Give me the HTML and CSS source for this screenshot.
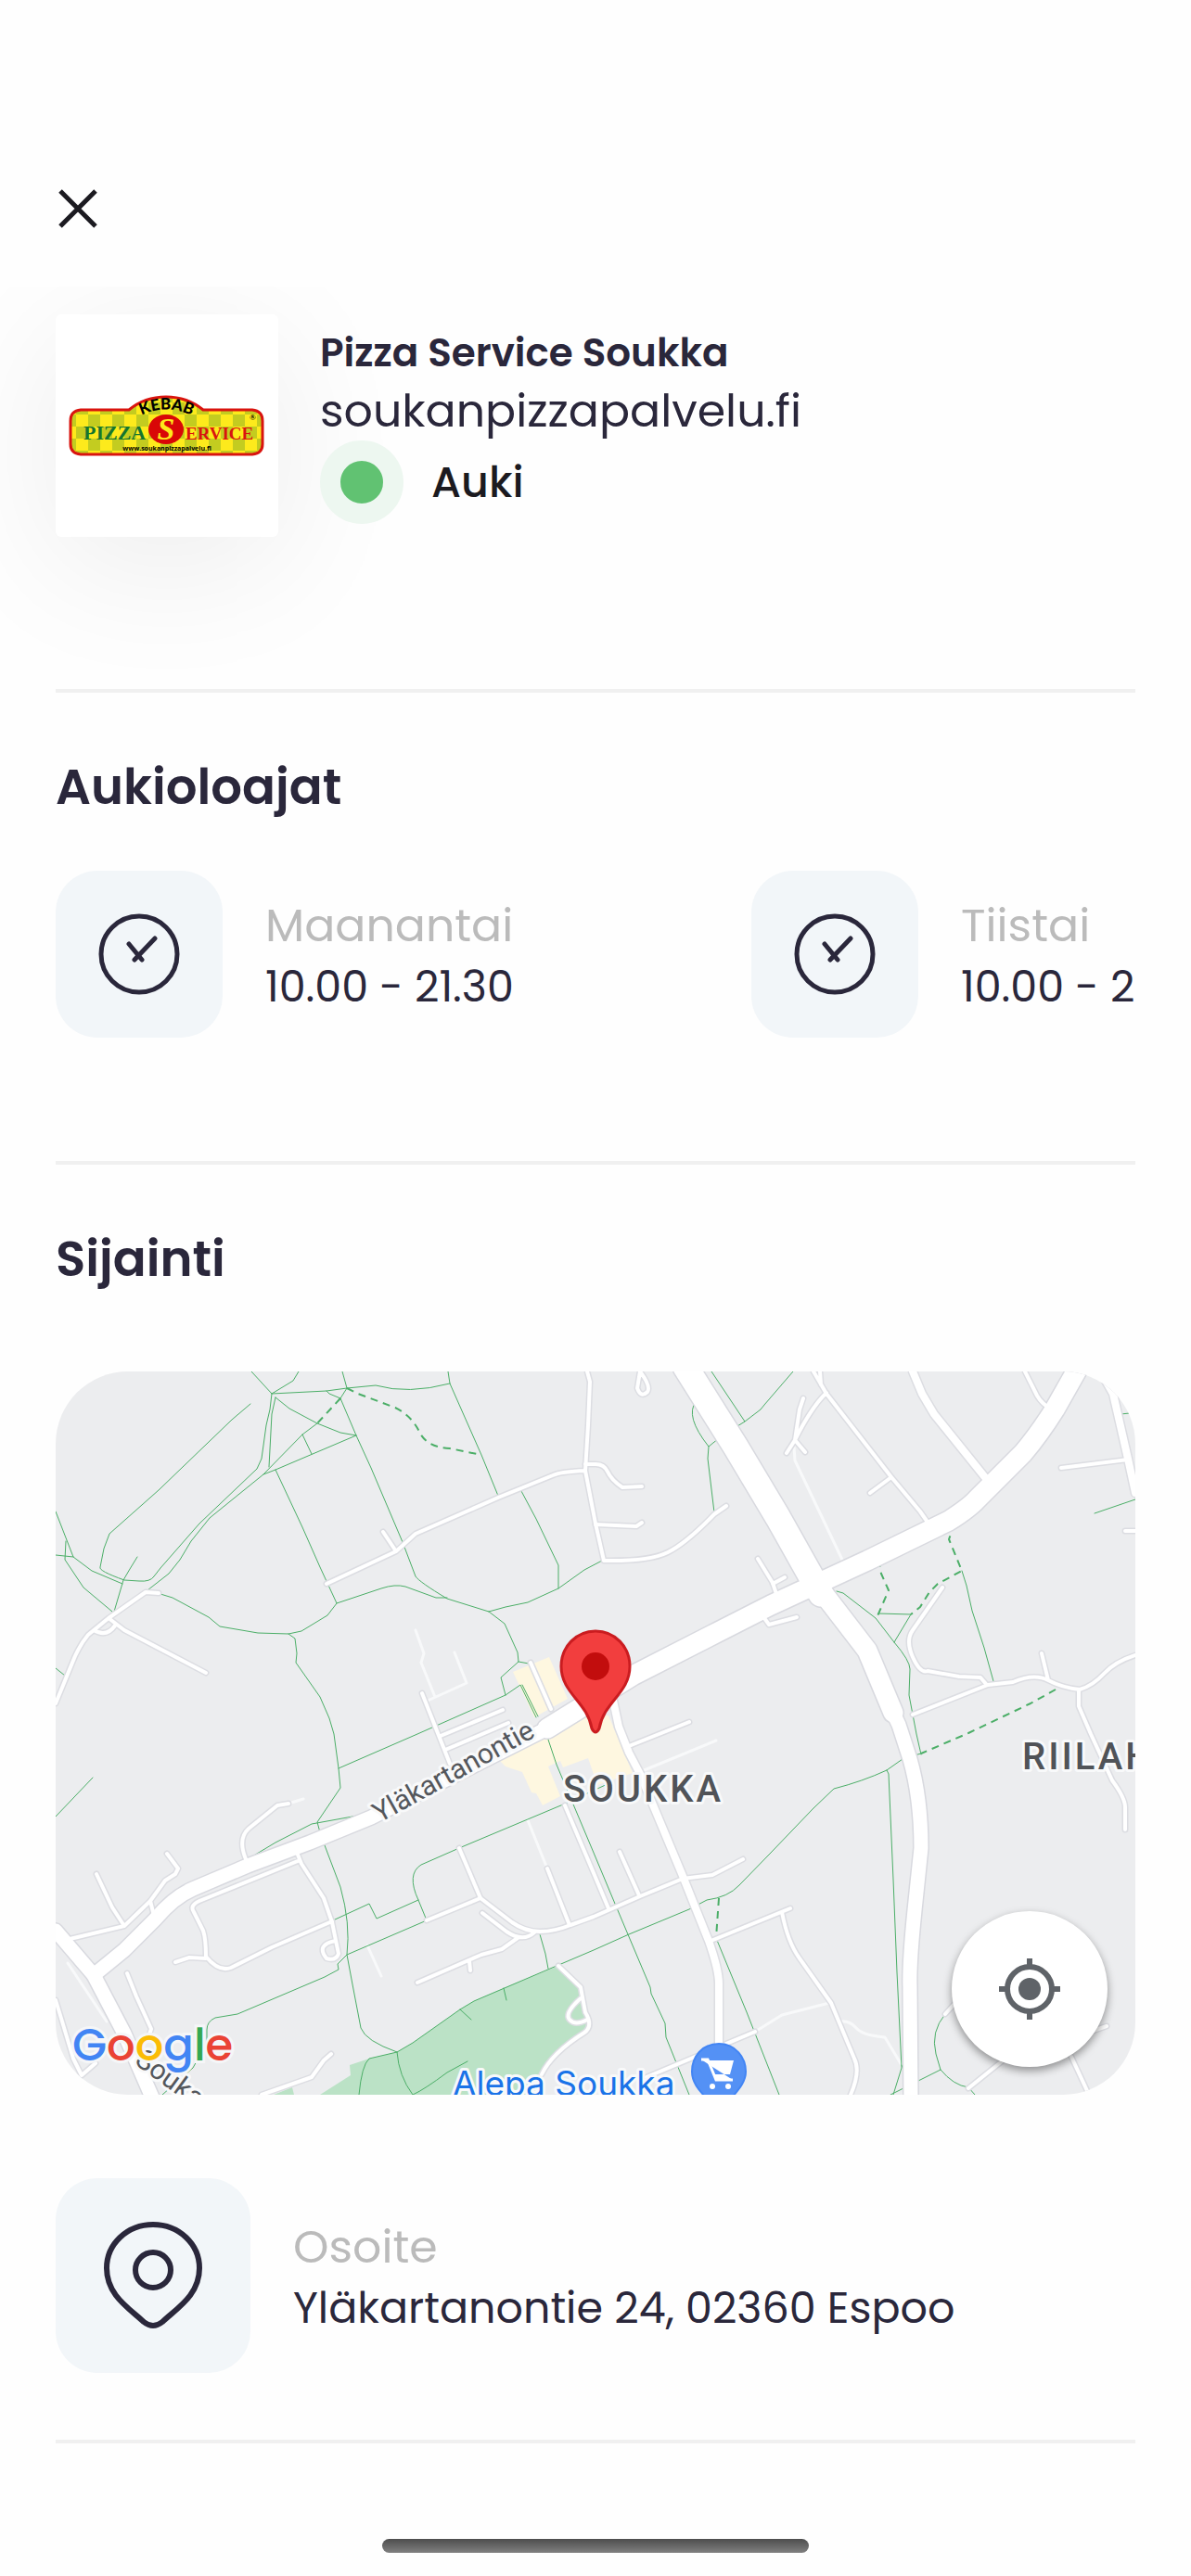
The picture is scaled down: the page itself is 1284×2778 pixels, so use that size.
FILE: index.html
```html
<!DOCTYPE html>
<html lang="fi">
<head>
  <meta charset="utf-8">
  <meta name="viewport" content="width=device-width, initial-scale=1">
  <title>Pizza Service Soukka</title>
  <link rel="stylesheet" href="styles.css">
</head>
<body>
  <header class="topbar">
    <button class="close" type="button" aria-label="Sulje">
      <svg viewBox="0 0 48 48" width="48" height="48"><path d="M5 5L43 43M43 5L5 43"/></svg>
    </button>
  </header>

  <main>
    <section class="restaurant">
      <div class="logo">
        <svg viewBox="0 0 240 240" role="img" aria-label="Pizza Service">
          <defs>
            <pattern id="checks" width="26" height="26" patternUnits="userSpaceOnUse" x="9" y="4">
              <rect width="26" height="26" fill="#fdea1c"/>
              <path d="M0 0h13v13H0zM13 13h13v13H13z" fill="#c3cc20"/>
            </pattern>
            <path id="arc" d="M85 113Q119 92 154 113"/>
          </defs>
          <path d="M27 103H79Q96 89 119 89T159 103H212Q223 104 223 115V140Q223 150 212 151H27Q16 150 16 140V115Q16 104 27 103Z" fill="url(#checks)" stroke="#d9140f" stroke-width="3"/>
          <text class="logo-kebab"><textPath href="#arc" startOffset="50%">KEBAB</textPath></text>
          <text class="logo-pizza" x="30" y="135">PIZZA</text>
          <text class="logo-service" x="140" y="135">ERVICE</text>
          <ellipse cx="119" cy="124" rx="19" ry="16" fill="#d90707"/>
          <text class="logo-s" x="119" y="135">S</text>
          <text class="logo-url" x="120" y="147">www.soukanpizzapalvelu.fi</text>
          <text class="logo-r" x="209" y="114">®</text>
        </svg>
      </div>
      <div class="details">
        <h1>Pizza Service Soukka</h1>
        <a class="site" href="#">soukanpizzapalvelu.fi</a>
        <p class="status"><span class="dot"></span>Auki</p>
      </div>
    </section>

    <section class="hours">
      <h2>Aukioloajat</h2>
      <ul class="days">
        <li class="day">
          <span class="tile">
            <svg viewBox="0 0 88 88" width="88" height="88"><circle cx="44" cy="44" r="41"/><path d="M33 33L47 50M61 27L39 50"/></svg>
          </span>
          <p class="info"><span class="label">Maanantai</span><span class="value">10.00 - 21.30</span></p>
        </li>
        <li class="day">
          <span class="tile">
            <svg viewBox="0 0 88 88" width="88" height="88"><circle cx="44" cy="44" r="41"/><path d="M33 33L47 50M61 27L39 50"/></svg>
          </span>
          <p class="info"><span class="label">Tiistai</span><span class="value">10.00 - 21.30</span></p>
        </li>
      </ul>
    </section>

    <section class="location">
      <h2>Sijainti</h2>
      <div class="map">
        <svg class="map-canvas" viewBox="0 0 1164 780" role="img" aria-label="Kartta">
          <defs>
            <!-- small streets, drawn twice: grey casing and white fill -->
            <g id="streets">
              <path d="M292 229L367 194L388 175L477 136L536 112Q545 108 571 107M353 173L367 194M573 0L576 11L574 58L571 107L582 164L591 204Q640 205 660 195T710 154L723 145"/>
              <path d="M571 100H580Q591 99 595 108T611 125L632 124M582 165L626 167L632 163"/>
              <path d="M111 239L97 238L57 266L35 284Q25 296 18 314L0 358M57 266L74 279L162 325M41 279Q55 287 64 274"/>
              <path d="M395 347L425 423M482 365L415 393M488 379L420 408M512 314L534 364"/>
              <path d="M630 0L627 18Q631 29 638 22Q642 16 630 0M817 0L831 24L901 114L932 151L939 161M824 0L825 14M831 23Q815 38 797 74L788 88M806 29L802 41L797 74L808 87M901 114L878 131"/>
              <path d="M1045 0L1058 26Q1063 35 1074 41M1084 104L1156 95M1153 172H1164"/>
              <path d="M757 202L773 228L778 243M773 229L786 222M764 266L769 273L799 265"/>
              <path d="M956 233L924 279Q916 290 924 308T940 323L974 329L997 330L1003 337M924 370L1005 338L1032 335Q1055 325 1070 333T1104 343Q1118 339 1130 326T1164 306M1063 304L1070 333M1103 343V361L1116 391L1139 441Q1153 460 1153 470V494"/>
              <path d="M683 378L618 404M400 592L458 568L492 594Q506 604 522 604T555 597L580 588L630 566L676 547L708 543L741 526M608 518L629 565M549 468L580 541L596 579"/>
              <path d="M704 615L792 579M783 583Q789 615 802 633L836 681L861 741Q868 755 857 780M754 712L637 761"/>
              <path d="M968 683L959 693M984 773L1020 744M1095 739L1114 780M1110 714L1133 706"/>
              <path d="M542 641L566 664L571 691Q580 706 570 713Q535 735 524 758M566 676Q548 692 554 699T573 699"/>
              <path d="M435 514L458 568M530 536L554 597M460 584L486 604Q504 616 516 605M498 611L481 623L459 629L390 659M446 636L447 646"/>
              <path d="M261 521L265 531L289 568L298 594L305 628Q302 636 292 633Q280 618 302 614M261 528L155 571Q144 576 149 583L159 603Q162 612 162 631Q176 648 189 643L233 621L298 593M162 633L144 632L129 637"/>
              <path d="M205 526Q196 504 208 493L239 468L251 466M120 520L132 536L129 542L118 549L102 571L74 598L11 613M44 542L61 578L74 598M102 571L105 583"/>
              <path d="M77 649L87 674L103 709L100 718M0 678L7 701L19 741L28 759L43 746M222 780L276 761L289 743L297 736"/>
            </g>
            <g id="mid-streets">
              <path d="M924 0L934 24L947 46L1005 118M1131 8L1140 24L1156 94L1164 131"/>
              <path d="M600 350L607 383L618 411L630 434L676 544L704 614Q715 645 715 660V740"/>
            </g>
            <g id="mains">
              <path class="w16" d="M41 651L74 624L107 591Q127 567 148 558L207 533L274 508L340 481L530 385"/>
              <path class="w16" d="M0 603L41 651L74 714L105 785"/>
              <path class="w16" d="M901 364L909 381L921 418Q933 460 933 514L926 581Q920 640 921 664L922 785"/>
              <path class="w22" d="M530 385L622 328L714 281L771 252L875 204L963 161Q985 147 993 138L1043 88Q1060 68 1077 41L1103 -5"/>
              <path class="w26" d="M679 -5L733 81L779 158L825 240"/>
              <path class="w22" d="M825 236L875 301L903 368"/>
            </g>
          </defs>

          <rect width="1164" height="780" fill="#ecedef"/>
          <path class="shops" d="M493 324L532 308L552 353L516 373ZM477 418L485 426L503 432L513 454L518 455L525 468L544 458L531 426L544 420L547 427L574 417L584 446L622 433L596 371H550Z"/>
          <path class="park" d="M542 641L565 664L572 694L573 708L529 744L523 760L515 780H285L318 759L317 748L338 741L368 734L385 724L436 688L451 679L483 665ZM235 780L255 772L257 780Z"/>

          <g class="alleys">
            <path d="M388 279L397 304L394 314L409 351M430 303L443 336L401 355M796 81L797 96L848 203M712 398L632 431M834 681L783 694L754 712M846 701Q856 700 862 707T880 716T894 718L912 748M509 484L530 536M336 619L351 652M251 466L267 461M13 638L55 701"/>
          </g>

          <g class="trails">
            <path d="M211 0L233 24L256 10L262 0M233 24L292 21L314 18L345 15Q380 25 425 13M423 0L425 13L459 90L477 134M309 0L314 18L307 29L324 69L340 104L374 184L388 221Q392 227 422 245L467 259M292 21L295 24L307 29"/>
            <path d="M237 28L252 40L282 56L307 66L324 69M282 56L266 68L224 111M266 68L276 89M324 69L237 106L224 111"/>
            <path d="M233 24L231 41L227 58L222 94L217 105L155 164L113 212L106 221Q102 227 90 226L74 225Q46 215 48 211L52 191L58 175L111 128L190 52L210 35M237 28L233 46L230 103"/>
            <path d="M224 111L166 158L146 183L134 203L122 218L99 236M237 106L266 168L285 211L303 250L351 234Q366 229 377 232L410 244H422M303 250L293 263L265 280L251 283L218 282L177 275L165 265L126 244L113 240"/>
            <path d="M251 283L258 288L260 304L259 314L285 351L295 374L300 391L305 428L307 449L282 486L285 497M0 151L19 200L39 215L72 229M11 183L10 203L30 233L61 259M0 198L19 200M88 200L80 213L73 225L63 259M0 320L10 328"/>
            <path d="M502 129L518 159L542 209V234M467 259L485 254L509 249L542 234L570 214L589 204M467 259L484 272L498 303L499 313L480 330L485 349M499 313L510 315M305 428L390 391L485 349L501 338L518 373M503 338L520 372"/>
            <path d="M707 0L743 54L735 59M795 0L764 36L760 41L743 54M690 33Q678 48 704 81L715 72M704 81L703 94L710 152M922 262L887 261M922 262L904 292M842 237L849 239L884 266L904 292Q921 312 921 321L920 349L928 391L933 413M977 215L982 231L988 258L1001 298L1011 334"/>
            <path d="M1120 153L1164 138M1148 46L1158 45M817 243L822 248M933 412L926 414M913 418L896 430Q870 442 839 450L817 471L771 519L737 554Q725 567 702 570L683 580L618 607L580 624L533 644L451 679L436 688L385 724L368 734L338 741Q330 748 327 780"/>
            <path d="M896 430L898 434L903 548L907 648L912 751L903 780M912 748L917 761M712 611L745 691L780 780M529 391L540 424L580 519L603 574L641 664L642 671L657 703L658 718L683 780"/>
            <path d="M900 780L954 753L949 736Q943 712 959 693M954 753Q968 770 984 772L991 780M0 480L40 438M207 526L237 508L276 488L331 478M290 511L307 556Q318 595 314 629L320 661L329 708Q334 722 368 734"/>
            <path d="M299 592L338 574L346 590L391 570M597 444L547 467L435 514L394 532Q378 542 391 570L400 592L314 629L304 639L305 645L290 653L196 693L172 697Q163 701 163 710V724L148 751L115 780"/>
            <path d="M368 734Q370 760 385 780Q398 774 422 756L444 744M436 688L448 699M483 665L486 678M522 607L528 628L531 644"/>
            <path class="dashed" d="M307 29L282 56M314 18L326 24L366 39Q384 48 392 65T425 83L459 90M964 164L966 173L963 181L977 215L951 229L942 238L932 254L922 262M887 203L890 218L898 236L885 266M1078 343L1051 358L984 390L933 412M715 568L712 611"/>
          </g>

          <use href="#streets" class="casing-s"/>
          <use href="#mid-streets" class="casing-m"/>
          <use href="#mains" class="casing-l"/>
          <use href="#streets" class="fill-s"/>
          <use href="#mid-streets" class="fill-m"/>
          <use href="#mains" class="fill-l"/>

          <g class="places">
            <text class="road-name" transform="translate(349 487) rotate(-29)">Yläkartanontie</text>
            <text class="road-name" transform="translate(84 746) rotate(36)">Soukantie</text>
            <text class="area" x="547" y="464">SOUKKA</text>
            <text class="area" x="1042" y="429">RIILAHTI</text>
            <text class="shop" x="428" y="781">Alepa Soukka</text>
          </g>

          <g>
            <path d="M715 725C697 725 686 739 686 755S700 780 708 792H722C730 780 744 770 744 755S733 725 715 725Z" fill="#5491f5" stroke="#4285f4" stroke-width="2"/>
            <path d="M696 742h7l9 22h18M703 743h28l-4 15h-18z" fill="#fff"/>
            <path d="M696 742h7l9 22h18" fill="none" stroke="#fff" stroke-width="3"/>
            <circle cx="708" cy="771" r="3" fill="#fff"/><circle cx="725" cy="771" r="3" fill="#fff"/>
          </g>

          <path d="M582 280C561 280 545 297 545 318C545 347 573 356 578 385Q582 393 586 385C591 356 619 347 619 318C619 297 603 280 582 280Z" fill="#f23e3e" stroke="#ca1c20" stroke-width="3"/>
          <circle cx="582" cy="318" r="15" fill="#c20d0d"/>

          <text class="google" x="18" y="743"><tspan class="blue">G</tspan><tspan class="red">o</tspan><tspan class="yellow">o</tspan><tspan class="blue">g</tspan><tspan class="green">l</tspan><tspan class="red">e</tspan></text>
        </svg>
        <button class="locate" type="button" aria-label="Oma sijainti">
          <svg viewBox="0 0 66 66" width="66" height="66">
            <circle cx="33" cy="33" r="24" fill="none" stroke="#5f6368" stroke-width="6"/>
            <circle cx="33" cy="33" r="12" fill="#5f6368"/>
            <path d="M33 0V9M33 57V66M0 33H9M57 33H66" stroke="#5f6368" stroke-width="6"/>
          </svg>
        </button>
      </div>

      <div class="address">
        <span class="tile tile-large">
          <svg viewBox="0 0 108 118" width="108" height="118"><path d="M54 4C26 4 4 25 4 51C4 80 28 94 44 109Q54 117 64 109C80 94 104 80 104 51C104 25 82 4 54 4Z"/><circle cx="54" cy="53" r="19"/></svg>
        </span>
        <p class="info"><span class="label">Osoite</span><span class="value">Yläkartanontie 24, 02360 Espoo</span></p>
      </div>
    </section>
  </main>

  <div class="home-bar"></div>
</body>
</html>
```
FILE: styles.css
```css
* {
  box-sizing: border-box;
}

body {
  margin: 0;
  background: #fefefe;
  color: #2a273b;
  font-family: Poppins, Inter, sans-serif;
  font-size: 46px;
}

h1, h2, p, ul {
  margin: 0;
  padding: 0;
}

button {
  display: flex;
  align-items: center;
  justify-content: center;
  padding: 0;
  border: 0;
}

.topbar {
  padding: 201px 60px 60px;
}

.close {
  background: none;
}

.close path {
  stroke: #1b1a20;
  stroke-width: 5;
}

/* restaurant card */

.restaurant {
  display: flex;
  gap: 45px;
  height: 434px;
  padding: 30px 60px 0;
  overflow: hidden;
}

.logo {
  flex: none;
  width: 240px;
  height: 240px;
  border-radius: 6px;
  background: #fff;
  box-shadow: 0 30px 150px rgba(0, 0, 0, 0.07);
}

.logo svg {
  display: block;
}

.logo text {
  font-family: "Liberation Serif", serif;
  font-weight: bold;
}

.logo .logo-kebab {
  font: 900 17px Lato, sans-serif;
  text-anchor: middle;
}

.logo-pizza {
  font-size: 22px;
  fill: #14752f;
}

.logo-service {
  font-size: 19px;
  fill: #d9140f;
}

.logo-s {
  font-size: 34px;
  font-style: italic;
  text-anchor: middle;
  fill: #fdea1c;
}

.logo .logo-url {
  font: bold 7px "Open Sans", sans-serif;
  text-anchor: middle;
}

.logo-r {
  font-size: 9px;
}

.details {
  padding-top: 12px;
}

h1 {
  font-size: 42px;
  font-weight: 600;
  line-height: 60px;
}

.site {
  display: block;
  color: inherit;
  font-size: 49px;
  line-height: 64px;
  text-decoration: none;
}

.status {
  display: flex;
  align-items: center;
  gap: 30px;
  color: #1b1a20;
  font-weight: 500;
}

.dot {
  width: 90px;
  height: 90px;
  border: 22px solid #edf7f0;
  border-radius: 50%;
  background: #61c272;
}

/* sections */

.hours,
.location {
  margin: 0 60px;
  border-top: 4px solid #f0f0f0;
}

h2 {
  padding-top: 68px;
  font-size: 53px;
  font-weight: 600;
  line-height: 68px;
}

.days {
  display: flex;
  height: 313px;
  margin-top: 56px;
  overflow: hidden;
  list-style: none;
}

.day {
  display: flex;
  flex: none;
  gap: 46px;
  width: 750px;
}

.tile {
  display: flex;
  flex: none;
  align-items: center;
  justify-content: center;
  width: 180px;
  height: 180px;
  border-radius: 45px;
  background: #f2f6f9;
}

.tile-large {
  width: 210px;
  height: 210px;
}

.tile svg {
  fill: none;
  stroke: #2a273b;
  stroke-width: 5;
  stroke-linecap: round;
}

.tile-large svg {
  stroke-width: 6;
}

.info {
  display: flex;
  flex-direction: column;
  padding-top: 26px;
  line-height: 66px;
  white-space: nowrap;
}

.label {
  color: #bbb;
  font-size: 49px;
}

/* map */

.map {
  position: relative;
  margin-top: 87px;
  border-radius: 78px;
  overflow: hidden;
}

.map-canvas {
  display: block;
  width: 100%;
}

.shops {
  fill: #fef7e0;
}

.park {
  fill: #bbe2c6;
}

.alleys,
.trails,
#streets,
#mid-streets,
#mains {
  fill: none;
  stroke-linecap: round;
  stroke-linejoin: round;
}

.alleys {
  stroke: #f8f9fa;
  stroke-width: 3;
}

.trails {
  stroke: #4bae67;
}

.dashed {
  stroke-width: 2;
  stroke-dasharray: 8 6;
  stroke-linecap: butt;
}

.casing-s { stroke: #dcdde2; stroke-width: 7; }
.casing-m { stroke: #dcdde2; stroke-width: 11; }
.casing-l { stroke: #d8d9df; --extra: 3px; }
.fill-s { stroke: #fff; stroke-width: 4; }
.fill-m { stroke: #fff; stroke-width: 8; }
.fill-l { stroke: #fff; --extra: 0px; }

.w16 { stroke-width: calc(15px + var(--extra)); }
.w22 { stroke-width: calc(21px + var(--extra)); }
.w26 { stroke-width: calc(27px + var(--extra)); }

.places text {
  font-family: Roboto, sans-serif;
  paint-order: stroke;
  stroke: #f8f9fa;
  stroke-width: 6;
  stroke-linejoin: round;
}

.road-name {
  font-size: 30px;
  fill: #54575c;
}

.area {
  font-size: 40px;
  font-weight: 500;
  letter-spacing: 3px;
  fill: #505358;
}

.places .shop {
  font-family: Inter, sans-serif;
  font-size: 37px;
  fill: #1a73e8;
}

.google {
  font-size: 48px;
  font-weight: 500;
  paint-order: stroke;
  stroke: #f5f6f8;
  stroke-width: 6;
}

.blue { fill: #4285f4; }
.red { fill: #ea4335; }
.yellow { fill: #fbbc05; }
.green { fill: #34a853; }

.locate {
  position: absolute;
  right: 30px;
  bottom: 30px;
  width: 168px;
  height: 168px;
  border-radius: 50%;
  background: #fff;
  box-shadow: 0 4px 10px rgba(0, 0, 0, 0.4);
}

.address {
  display: flex;
  gap: 46px;
  padding: 90px 0 72px;
  border-bottom: 4px solid #f0f0f0;
}

.address .info {
  padding-top: 41px;
}

.home-bar {
  width: 460px;
  height: 15px;
  margin: 103px auto 20px;
  border-radius: 8px;
  background: linear-gradient(#4d4d4d, #808080);
}
```
